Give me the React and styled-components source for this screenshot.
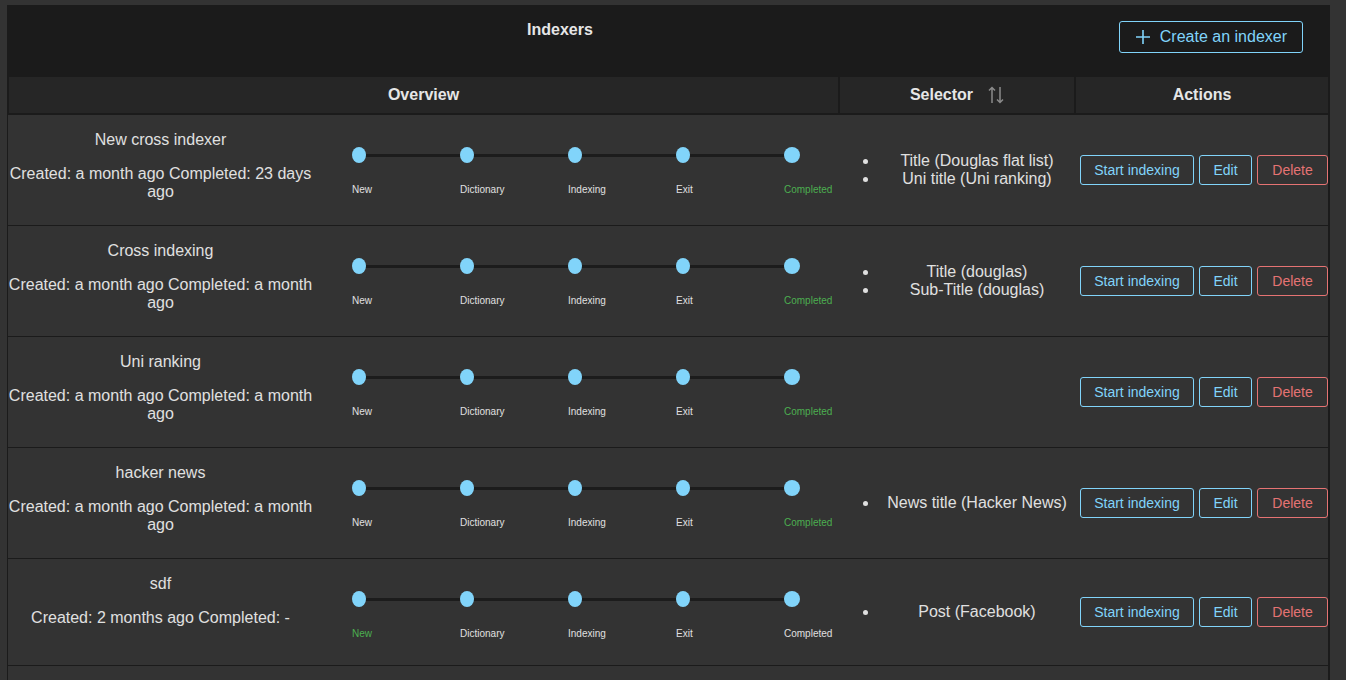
import React from 'react';
import styled, { createGlobalStyle } from 'styled-components';

const Global = createGlobalStyle`
  html, body { margin: 0; padding: 0; background: #333333; overflow: hidden; }
  body { font-family: "Liberation Sans", Arial, sans-serif; color: #e0e0e0; }
  #root { padding: 5px 0 0 7px; }
`;

const Panel = styled.div`
  width: 1323px;
  background: #1b1b1b;
  min-height: 720px;
`;

const TopBar = styled.div`
  display: flex;
  align-items: flex-start;
  height: 72px;
`;

const Title = styled.h1`
  flex: 1;
  margin: 0;
  padding-top: 16px;
  text-align: center;
  font-size: 16px;
  line-height: 18px;
  font-weight: 700;
  color: #e6e6e6;
`;

const CreateButton = styled.button`
  display: flex;
  align-items: center;
  gap: 10px;
  height: 32px;
  margin: 16px 27px 0 6px;
  padding: 0 15px 0 16px;
  background: transparent;
  border: 1px solid #81d4fa;
  border-radius: 3px;
  color: #81d4fa;
  font-family: inherit;
  font-size: 16px;
`;

const HeaderRow = styled.div`
  display: grid;
  grid-template-columns: 829px 234px 252px;
  column-gap: 2px;
  padding: 0 2px 2px 2px;
`;

const HeaderCell = styled.div`
  height: 36px;
  background: #262626;
  display: flex;
  align-items: center;
  justify-content: center;
  gap: 15px;
  font-size: 16px;
  font-weight: 700;
  color: #e6e6e6;
`;

const Row = styled.div`
  display: grid;
  grid-template-columns: 831px 236px 253px;
  margin: 0 2px 1px 1px;
  background: #333333;
`;

const OverviewCell = styled.div`
  display: flex;
  align-items: flex-start;
`;

const Info = styled.div`
  width: 305px;
  padding: 16px 0 24px;
  text-align: center;
  font-size: 16px;
  line-height: 18px;
  color: #e0e0e0;
`;

const Name = styled.div``;

const Dates = styled.div`
  margin-top: 16px;
`;

const Stepper = styled.div`
  display: grid;
  grid-template-columns: repeat(4, 108px) auto;
  margin-left: 39px;
  padding: 32px 0 25px;
`;

const Step = styled.div`
  display: flex;
  flex-direction: column;
`;

const Track = styled.div`
  display: flex;
  align-items: center;
  height: 16px;
`;

const Dot = styled.span`
  width: ${p => (p.$big ? 16 : 14)}px;
  height: 16px;
  border-radius: 50%;
  background: #81d4fa;
  flex: none;
`;

const Line = styled.span`
  flex: 1;
  height: 3px;
  background: #1c1c1c;
`;

const StepLabel = styled.span`
  margin-top: 21px;
  font-size: 10px;
  line-height: 12px;
  color: ${p => (p.$current ? '#4caf50' : '#e0e0e0')};
`;

const SelectorCell = styled.div`
  display: flex;
  align-items: center;
`;

const SelectorList = styled.ul`
  margin: 0;
  padding-left: 40px;
  flex: 1;
  text-align: center;
  font-size: 16px;
  line-height: 18px;
  color: #e0e0e0;
`;

const ActionsCell = styled.div`
  display: flex;
  align-items: center;
  gap: 5px;
  padding-left: 5px;
`;

const ActionButton = styled.button`
  width: ${p => p.$w}px;
  height: 30px;
  padding: 0;
  background: transparent;
  border: 1px solid ${p => (p.$danger ? '#e57373' : '#81d4fa')};
  border-radius: 3px;
  color: ${p => (p.$danger ? '#e57373' : '#81d4fa')};
  font-family: inherit;
  font-size: 14px;
  white-space: nowrap;
`;

const PlusIcon = () => (
  <svg width="14" height="16" viewBox="0 0 14 16" fill="none" stroke="#81d4fa" strokeWidth="1.6">
    <path d="M7 1v14M0 8h14" />
  </svg>
);

const SortIcon = () => (
  <svg width="16" height="18" viewBox="0 0 16 18" fill="none" stroke="#8a8a8a" strokeWidth="1.5">
    <path d="M4 17V1.5M1 4.5L4 1.5L7 4.5" />
    <path d="M12 1v15.5M9 13.5L12 16.5L15 13.5" />
  </svg>
);

const STEPS = ['New', 'Dictionary', 'Indexing', 'Exit', 'Completed'];

const rows = [
  { name: 'New cross indexer', created: 'a month ago', completed: '23 days ago', current: 4, selectors: ['Title (Douglas flat list)', 'Uni title (Uni ranking)'] },
  { name: 'Cross indexing', created: 'a month ago', completed: 'a month ago', current: 4, selectors: ['Title (douglas)', 'Sub-Title (douglas)'] },
  { name: 'Uni ranking', created: 'a month ago', completed: 'a month ago', current: 4, selectors: [] },
  { name: 'hacker news', created: 'a month ago', completed: 'a month ago', current: 4, selectors: ['News title (Hacker News)'] },
  { name: 'sdf', created: '2 months ago', completed: '-', current: 0, selectors: ['Post (Facebook)'] },
  { name: 'test', created: '2 months ago', completed: '-', current: 0, selectors: ['Post (Facebook)'] },
];

export default function App() {
  return (
    <>
      <Global />
      <Panel>
        <TopBar>
          <Title>Indexers</Title>
          <CreateButton>
            <PlusIcon />
            Create an indexer
          </CreateButton>
        </TopBar>
        <HeaderRow>
          <HeaderCell>Overview</HeaderCell>
          <HeaderCell>
            Selector
            <SortIcon />
          </HeaderCell>
          <HeaderCell>Actions</HeaderCell>
        </HeaderRow>
        {rows.map((r, i) => (
          <Row key={i}>
            <OverviewCell>
              <Info>
                <Name>{r.name}</Name>
                <Dates>
                  Created: {r.created} Completed: {r.completed}
                </Dates>
              </Info>
              <Stepper>
                {STEPS.map((s, k) => (
                  <Step key={s}>
                    <Track>
                      <Dot $big={k === STEPS.length - 1} />
                      {k < STEPS.length - 1 && <Line />}
                    </Track>
                    <StepLabel $current={k === r.current}>{s}</StepLabel>
                  </Step>
                ))}
              </Stepper>
            </OverviewCell>
            <SelectorCell>
              {r.selectors.length > 0 && (
                <SelectorList>
                  {r.selectors.map(s => (
                    <li key={s}>{s}</li>
                  ))}
                </SelectorList>
              )}
            </SelectorCell>
            <ActionsCell>
              <ActionButton $w={114}>Start indexing</ActionButton>
              <ActionButton $w={53}>Edit</ActionButton>
              <ActionButton $w={71} $danger>Delete</ActionButton>
            </ActionsCell>
          </Row>
        ))}
      </Panel>
    </>
  );
}
